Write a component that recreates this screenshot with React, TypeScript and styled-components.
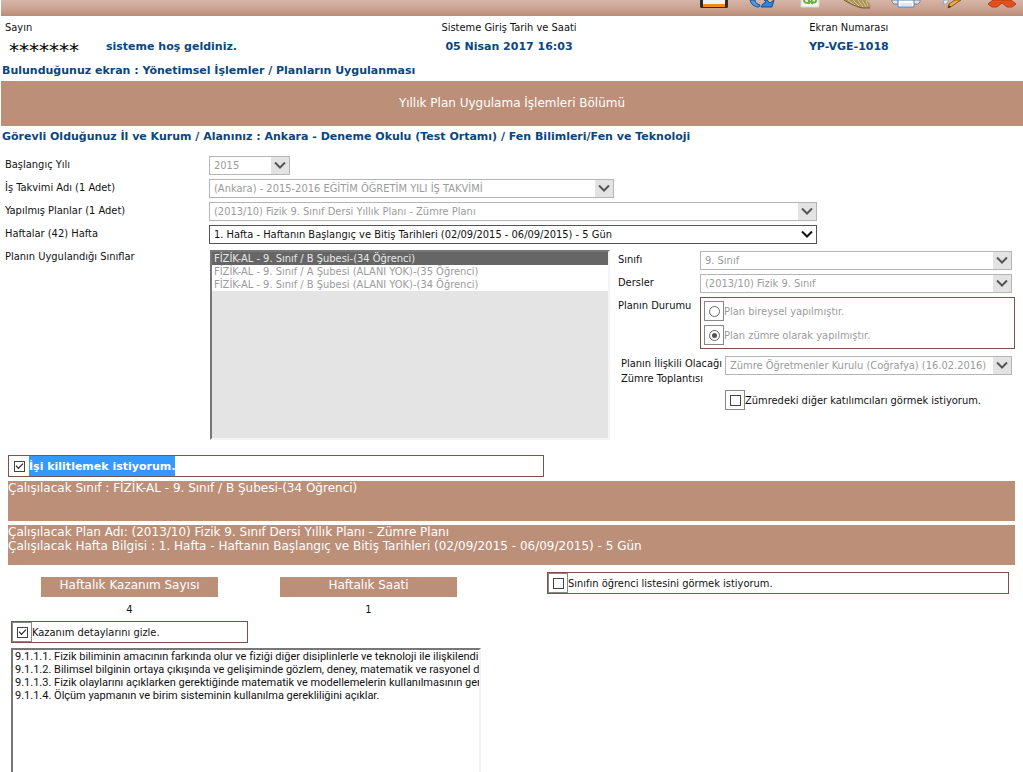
import React from "react";
import styled, { createGlobalStyle, css } from "styled-components";

const CLAY = "#bc8f79";
const NAVY = "#0b4680";
const BROWN = "#7b5248";

const GlobalStyle = createGlobalStyle`
  body { margin: 0; background: #fff; }
  * { box-sizing: border-box; }
`;

const Page = styled.div`
  font: 11px/13px "DejaVu Sans Condensed", Tahoma, "DejaVu Sans", sans-serif;
  color: #111;
  padding-left: 1px;
  height: 100vh;
  overflow: hidden;
`;

const Toolbar = styled.nav`
  display: flex;
  justify-content: flex-end;
  gap: 16px;
  height: 16px;
  padding-right: 5px;
  background: linear-gradient(#d6b5a8, #c9a190 60%, #b98b75);
`;

const ToolButton = styled.button`
  display: flex;
  align-items: flex-start;
  width: 32px;
  height: 16px;
  padding: 0;
  border: 0;
  background: none;
`;

const Header = styled.header`
  display: grid;
  grid-template-columns: 335fr 340fr 341fr;
  padding: 5px 4px 0;
  height: 44px;
`;

const HeaderCell = styled.div<{ $left?: boolean }>`
  display: flex;
  flex-direction: column;
  gap: 5px;
  text-align: ${(p) => (p.$left ? "left" : "center")};
  line-height: 14px;
`;

const Strong = styled.strong`
  font: bold 11px/14px "DejaVu Sans", Verdana, sans-serif;
  color: ${NAVY};
`;

const Welcome = styled.div`
  display: flex;
  gap: 27px;
  padding-left: 4px;
`;

const Stars = styled.span`
  font: 20px/20px "DejaVu Sans", sans-serif;
  color: #000;
`;

const PathLine = styled.p`
  margin: 0;
  padding-left: 1px;
  font: bold 11px/21px "DejaVu Sans", Verdana, sans-serif;
  color: ${NAVY};
`;

const Title = styled.h1`
  margin: 0;
  padding: 1px 0;
  text-align: center;
  font: 12px/43px "DejaVu Sans", Verdana, sans-serif;
  color: #fff;
  background: ${CLAY};
`;

const Form = styled.form`
  display: grid;
  grid-template-columns: 204px minmax(0, 1fr);
  row-gap: 4px;
  padding: 9px 0 0 4px;
`;

const Label = styled.label`
  padding-top: 2px;
`;

const SelectBox = styled.div<{ $width?: string }>`
  position: relative;
  width: ${(p) => p.$width ?? "100%"};
  height: 19px;
`;

const NativeSelect = styled.select`
  appearance: none;
  width: 100%;
  height: 19px;
  padding: 0 20px 0 4px;
  border: 1px solid #555;
  border-radius: 0;
  background: #fff;
  color: #111;
  font: inherit;
  &:disabled { border-color: #b5b5b5; color: #9b9b9b; opacity: 1; }
`;

const Arrow = styled.span<{ $off?: boolean }>`
  position: absolute;
  top: 1px;
  right: 1px;
  width: 18px;
  height: 17px;
  pointer-events: none;
  color: ${(p) => (p.$off ? "#555" : "#111")};
  background: ${(p) => (p.$off ? "#e3e3e3" : "#fff")};
  svg { display: block; }
`;

const Columns = styled.div`
  display: grid;
  grid-template-columns: 400px minmax(0, 1fr);
  column-gap: 8px;
  padding: 2px 8px 0 1px;
`;

const sunken = css`
  border: 2px solid;
  border-color: #777 #f4f4f4 #f4f4f4 #777;
`;

const ClassList = styled.select`
  ${sunken}
  appearance: none;
  width: 100%;
  height: 190px;
  padding: 0;
  border-radius: 0;
  outline: 0;
  background: #e4e4e4;
  font: inherit;
  overflow: hidden;
  &:disabled { opacity: 1; }
  option {
    min-height: 13px;
    padding: 0 2px;
    background: #fff;
    color: #9b9b9b;
  }
  option:checked { background: #666; color: #e8e8e8; }
`;

const Side = styled.div`
  display: grid;
  grid-template-columns: 82px minmax(0, 1fr);
  row-gap: 4px;
  align-content: start;
  padding-top: 1px;
`;

const Meeting = styled.div`
  grid-column: 1 / -1;
  display: grid;
  grid-template-columns: 104px minmax(0, 1fr);
  row-gap: 4px;
  padding: 3px 0 0 3px;
  ${Label} { line-height: 15px; padding-top: 0; white-space: nowrap; }
`;

const Inset = styled.div`
  padding-right: 3px;
`;

const Outline = styled.fieldset<{ $width?: string }>`
  width: ${(p) => p.$width ?? "100%"};
  min-width: 0;
  margin: 0;
  padding: 0;
  border: 1px solid ${BROWN};
`;

const Radios = styled(Outline)`
  display: flex;
  flex-direction: column;
  gap: 4px;
  padding: 3px;
`;

const Choice = styled.label<{ $off?: boolean }>`
  display: flex;
  align-items: center;
  color: ${(p) => (p.$off ? "#9b9b9b" : "#111")};
  span { padding-top: 2px; line-height: 18px; }
`;

const Frame = styled.i<{ $bare?: boolean }>`
  display: grid;
  place-items: center;
  flex: none;
  width: 20px;
  height: 20px;
  border: 1px solid ${(p) => (p.$bare ? "transparent" : "#888")};
`;

const Tick = styled.input`
  appearance: none;
  display: grid;
  place-items: center;
  width: 11px;
  height: 11px;
  margin: 0;
  border: 1px solid #444;
  background: #fff;
  &[type="radio"] { border-radius: 50%; border-color: #666; }
  &[type="radio"]:checked::after {
    content: "";
    width: 5px;
    height: 5px;
    border-radius: 50%;
    background: #555;
  }
  &[type="checkbox"]:checked::after {
    content: "";
    width: 6px;
    height: 3px;
    border: solid #111;
    border-width: 0 0 1px 1px;
    transform: translateY(-1px) rotate(-45deg);
  }
`;

const Highlight = styled.b`
  padding-top: 2px;
  line-height: 18px;
  font-family: "DejaVu Sans", Verdana, sans-serif;
  color: #fff;
  background: #3399ff;
`;

const Work = styled.section`
  padding: 15px 8px 0 7px;
`;

const Band = styled.div`
  height: 40px;
  margin-top: 4px;
  font: 12px/14px "DejaVu Sans", Verdana, sans-serif;
  color: #fff;
  background: ${CLAY};
  p { margin: 0; }
`;

const Details = styled.div`
  display: grid;
  grid-template-columns: 539px minmax(0, 1fr);
  align-items: start;
  padding: 7px 6px 0 0;
`;

const Achievements = styled.div`
  padding-left: 3px;
`;

const Stats = styled.dl`
  display: grid;
  grid-template-columns: 177px 177px;
  column-gap: 62px;
  margin: 0;
  padding: 5px 0 5px 30px;
  text-align: center;
`;

const Stat = styled.div`
  dt {
    height: 20px;
    font: 12px/16px "DejaVu Sans", Verdana, sans-serif;
    color: #fff;
    background: ${CLAY};
  }
  dd { margin: 0; padding-top: 6px; }
`;

const Gains = styled.ul`
  ${sunken}
  width: 470px;
  height: 180px;
  margin: 5px 0 0;
  padding: 0 0 0 2px;
  font-family: Roboto, Tahoma, sans-serif;
  list-style: none;
  white-space: nowrap;
  overflow: hidden;
`;

const Chevron = () => (
  <svg width="18" height="17" viewBox="0 0 18 17" fill="none" stroke="currentColor" strokeWidth="2">
    <path d="M4 5.5l5 5 5-5" />
  </svg>
);

type PickProps = { id: string; value: string; width?: string; active?: boolean };

const Pick = ({ id, value, width, active }: PickProps) => (
  <SelectBox $width={width}>
    <NativeSelect id={id} disabled={!active}>
      <option>{value}</option>
    </NativeSelect>
    <Arrow $off={!active}>
      <Chevron />
    </Arrow>
  </SelectBox>
);

const tools: { name: string; art: React.ReactNode }[] = [
  {
    name: "Kaydet",
    art: (
      <>
        <path d="M2 0h28v7l-1 1H3L2 7z" fill="#2b2d36" />
        <path d="M5 0h22v4H5z" fill="#eef3fa" />
        <path d="M5 4h22v3H5z" fill="#f58a12" />
      </>
    ),
  },
  {
    name: "Yenile",
    art: (
      <>
        <path d="M4 0c1 4 4 7 9 7l1-2C11 4 9 3 9 0z" fill="#4b9ae4" stroke="#164f92" />
        <path d="M18 0l2 2-3 2-2 3h11l2-7-4 3-3-3z" fill="#2f86dc" stroke="#164f92" />
      </>
    ),
  },
  {
    name: "Geri dönüşüm",
    art: (
      <>
        <path d="M7 0h18v7H7z" fill="#f3f6ef" stroke="#d5d9cf" />
        <path d="M10 0c0 3 2 3 5 3V0M18 0l-1 2 2 2M18 2c4 1 4 0 4-2" fill="none" stroke="#6ab03c" strokeWidth="2" />
      </>
    ),
  },
  {
    name: "Temizle",
    art: (
      <>
        <path d="M2 0c5 3 10 6 18 8h8c1-3-1-6-3-8z" fill="#ab915c" />
        <path d="M6 0l7 5M11 0l6 6M16 0l5 7M20 0l4 7M24 0l2 6" stroke="#dccb94" fill="none" />
        <path d="M2 0c5 3 10 6 18 8h8" stroke="#6d5a30" fill="none" />
      </>
    ),
  },
  {
    name: "Yazdır",
    art: (
      <>
        <path d="M2 0h28v2l-2 2H4L2 2z" fill="#dfe4ec" stroke="#78808e" />
        <path d="M8 0h16v7H8z" fill="#fff" stroke="#5b83b8" />
        <path d="M10 3h12v3H10z" fill="#dbe8f8" />
      </>
    ),
  },
  {
    name: "Düzenle",
    art: (
      <>
        <path d="M6 0h5L8 4H5z" fill="#eceff4" stroke="#9aa2ad" />
        <path d="M17 0h6l-9 6-4 2 1-4z" fill="#f6a840" stroke="#8f5a18" />
        <path d="M10 8l1-3 2 2z" fill="#333" />
      </>
    ),
  },
  {
    name: "Kapat",
    art: <path d="M7 0L2 4l4 3h5l5-4 5 4h5l4-3-5-4z" fill="#e2501d" stroke="#c03c0f" />,
  },
];

const gains = [
  "9.1.1.1. Fizik biliminin amacının farkında olur ve fiziği diğer disiplinlerle ve teknoloji ile ilişkilendi",
  "9.1.1.2. Bilimsel bilginin ortaya çıkışında ve gelişiminde gözlem, deney, matematik ve rasyonel d",
  "9.1.1.3. Fizik olaylarını açıklarken gerektiğinde matematik ve modellemelerin kullanılmasının ger",
  "9.1.1.4. Ölçüm yapmanın ve birim sisteminin kullanılma gerekliliğini açıklar.",
];

export default function App() {
  return (
    <Page lang="tr">
      <GlobalStyle />
      <Toolbar aria-label="Araçlar">
        {tools.map((t) => (
          <ToolButton key={t.name} type="button" aria-label={t.name}>
            <svg width="32" height="10" viewBox="0 0 32 10">
              {t.art}
            </svg>
          </ToolButton>
        ))}
      </Toolbar>
      <Header>
        <HeaderCell $left>
          <span>Sayın</span>
          <Welcome>
            <Stars>*******</Stars>
            <Strong>sisteme hoş geldiniz.</Strong>
          </Welcome>
        </HeaderCell>
        <HeaderCell>
          <span>Sisteme Giriş Tarih ve Saati</span>
          <Strong>05 Nisan 2017 16:03</Strong>
        </HeaderCell>
        <HeaderCell>
          <span>Ekran Numarası</span>
          <Strong>YP-VGE-1018</Strong>
        </HeaderCell>
      </Header>
      <PathLine>Bulunduğunuz ekran : Yönetimsel İşlemler / Planların Uygulanması</PathLine>
      <Title>Yıllık Plan Uygulama İşlemleri Bölümü</Title>
      <PathLine>
        Görevli Olduğunuz İl ve Kurum / Alanınız : Ankara - Deneme Okulu (Test Ortamı) / Fen Bilimleri/Fen ve
        Teknoloji
      </PathLine>
      <Form>
        <Label htmlFor="yil">Başlangıç Yılı</Label>
        <Pick id="yil" value="2015" width="81px" />
        <Label htmlFor="takvim">İş Takvimi Adı (1 Adet)</Label>
        <Pick id="takvim" value="(Ankara) - 2015-2016 EĞİTİM ÖĞRETİM YILI İŞ TAKVİMİ" width="405px" />
        <Label htmlFor="plan">Yapılmış Planlar (1 Adet)</Label>
        <Pick id="plan" value="(2013/10) Fizik 9. Sınıf Dersi Yıllık Planı - Zümre Planı" width="608px" />
        <Label htmlFor="hafta">Haftalar (42) Hafta</Label>
        <Pick
          id="hafta"
          value="1. Hafta - Haftanın Başlangıç ve Bitiş Tarihleri (02/09/2015 - 06/09/2015) - 5 Gün"
          width="608px"
          active
        />
        <Label htmlFor="siniflar">Planın Uygulandığı Sınıflar</Label>
        <Columns>
          <ClassList id="siniflar" size={14} disabled defaultValue="b">
            <option value="b">FİZİK-AL - 9. Sınıf / B Şubesi-(34 Öğrenci)</option>
            <option value="a2">FİZİK-AL - 9. Sınıf / A Şubesi (ALANI YOK)-(35 Öğrenci)</option>
            <option value="b2">FİZİK-AL - 9. Sınıf / B Şubesi (ALANI YOK)-(34 Öğrenci)</option>
          </ClassList>
          <Side>
            <Label htmlFor="sinif">Sınıfı</Label>
            <Inset>
              <Pick id="sinif" value="9. Sınıf" />
            </Inset>
            <Label htmlFor="ders">Dersler</Label>
            <Inset>
              <Pick id="ders" value="(2013/10) Fizik 9. Sınıf" />
            </Inset>
            <Label as="span">Planın Durumu</Label>
            <Radios aria-label="Planın Durumu">
              <Choice $off>
                <Frame>
                  <Tick type="radio" name="durum" disabled />
                </Frame>
                <span>Plan bireysel yapılmıştır.</span>
              </Choice>
              <Choice $off>
                <Frame>
                  <Tick type="radio" name="durum" disabled defaultChecked />
                </Frame>
                <span>Plan zümre olarak yapılmıştır.</span>
              </Choice>
            </Radios>
            <Meeting>
              <Label htmlFor="toplanti">
                Planın İlişkili Olacağı
                <br />
                Zümre Toplantısı
              </Label>
              <Inset>
                <Pick id="toplanti" value="Zümre Öğretmenler Kurulu (Coğrafya) (16.02.2016)" />
              </Inset>
              <span />
              <Choice>
                <Frame>
                  <Tick type="checkbox" />
                </Frame>
                <span>Zümredeki diğer katılımcıları görmek istiyorum.</span>
              </Choice>
            </Meeting>
          </Side>
        </Columns>
      </Form>
      <Work>
        <Outline $width="536px">
          <Choice>
            <Frame $bare>
              <Tick type="checkbox" defaultChecked />
            </Frame>
            <Highlight>İşi kilitlemek istiyorum.</Highlight>
          </Choice>
        </Outline>
        <Band>
          <p>Çalışılacak Sınıf : FİZİK-AL - 9. Sınıf / B Şubesi-(34 Öğrenci)</p>
        </Band>
        <Band>
          <p>Çalışılacak Plan Adı: (2013/10) Fizik 9. Sınıf Dersi Yıllık Planı - Zümre Planı</p>
          <p>Çalışılacak Hafta Bilgisi : 1. Hafta - Haftanın Başlangıç ve Bitiş Tarihleri (02/09/2015 - 06/09/2015) - 5 Gün</p>
        </Band>
        <Details>
          <Achievements>
            <Stats>
              <Stat>
                <dt>Haftalık Kazanım Sayısı</dt>
                <dd>4</dd>
              </Stat>
              <Stat>
                <dt>Haftalık Saati</dt>
                <dd>1</dd>
              </Stat>
            </Stats>
            <Outline $width="237px">
              <Choice>
                <Frame>
                  <Tick type="checkbox" defaultChecked />
                </Frame>
                <span>Kazanım detaylarını gizle.</span>
              </Choice>
            </Outline>
            <Gains>
              {gains.map((g) => (
                <li key={g}>{g}</li>
              ))}
            </Gains>
          </Achievements>
          <Outline>
            <Choice>
              <Frame>
                <Tick type="checkbox" />
              </Frame>
              <span>Sınıfın öğrenci listesini görmek istiyorum.</span>
            </Choice>
          </Outline>
        </Details>
      </Work>
    </Page>
  );
}
